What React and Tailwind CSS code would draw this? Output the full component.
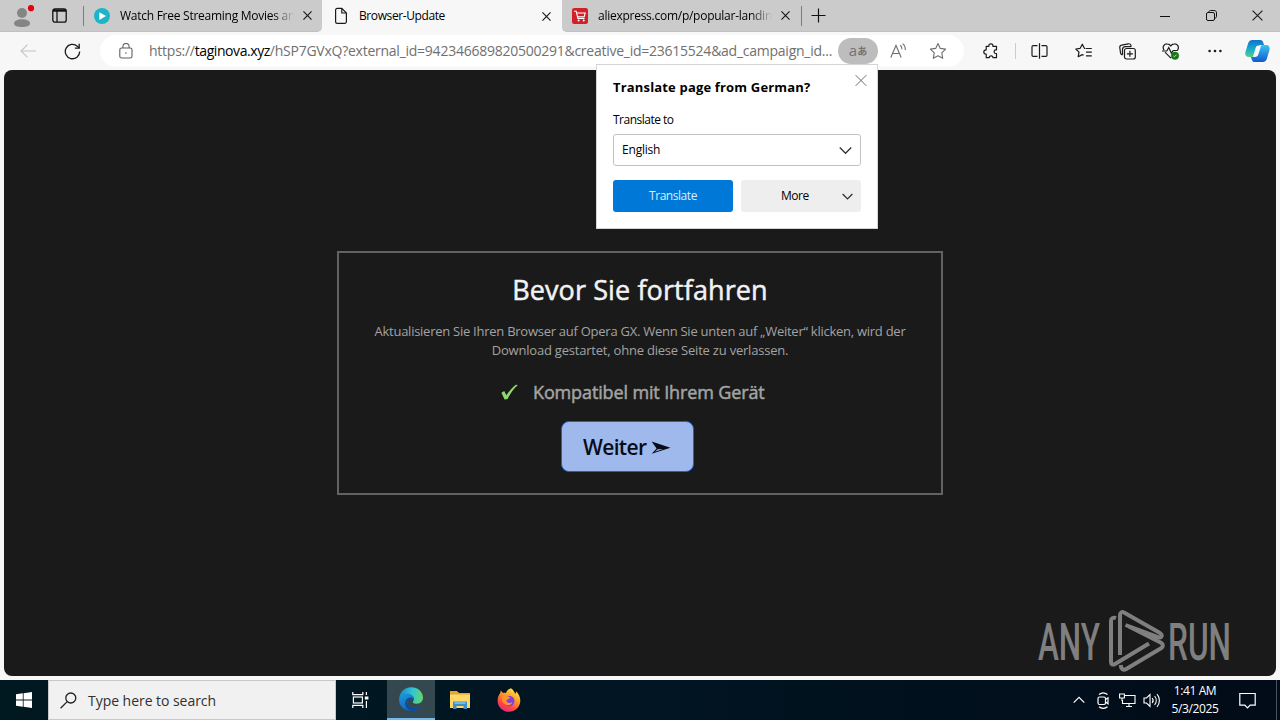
import React from 'react';
import { clsx } from 'clsx';

const PageIcon = () => (
  <svg width="14" height="18" viewBox="0 0 14 18" fill="none" stroke="#1a1a1a" strokeWidth="1.2">
    <path d="M1.6 3a1.6 1.6 0 0 1 1.6-1.6h4.6L12.4 6v8.8a1.6 1.6 0 0 1-1.6 1.6H3.2a1.6 1.6 0 0 1-1.6-1.6Z" />
    <path d="M7.8 1.6V6h4.4" />
  </svg>
);

const PlayIcon = () => (
  <svg width="16" height="16" viewBox="0 0 16 16">
    <circle cx="8" cy="8" r="8" fill="#1fb3c6" />
    <path d="M5.3 4.2 12 8l-6.7 3.9Z" fill="#fff" />
  </svg>
);

const CartIcon = () => (
  <svg width="16" height="16" viewBox="0 0 16 16">
    <rect width="16" height="16" rx="2.2" fill="#d2202b" />
    <g fill="none" stroke="#fff" strokeWidth="1.1">
      <path d="M2 3.2h2.2l1.7 7.2h6.6" />
      <path d="M4.7 5h8.5l-1 3.7H5.6" />
    </g>
    <circle cx="6.6" cy="12.5" r="1" fill="#fff" />
    <circle cx="11.7" cy="12.5" r="1" fill="#fff" />
  </svg>
);

const Cross = ({ size = 9, color = '#1a1a1a', width = 1.3 }) => (
  <svg width={size} height={size} viewBox="0 0 10 10" stroke={color} strokeWidth={width}>
    <path d="m.5.5 9 9M9.5.5l-9 9" />
  </svg>
);

const Chevron = ({ size = 12, color = '#333', up = false, width = 1.2 }) => (
  <svg
    width={size}
    height={size}
    viewBox="0 0 12 12"
    fill="none"
    stroke={color}
    strokeWidth={width}
    className={clsx(up && 'rotate-180')}
  >
    <path d="m.7 3.3 5.3 5.3 5.3-5.3" />
  </svg>
);

const Tab = ({ icon: Icon, title, active, className, textClass }) => (
  <div className={clsx('flex h-8 items-center', active && 'bg-[#f7f7f7]', className)}>
    <div className="flex w-4 shrink-0 justify-center"><Icon /></div>
    <div className={clsx('ml-[10px] w-[174px] whitespace-nowrap text-[12px] leading-4 text-black', !active && 'mask-r-from-88%', textClass)}>
      {title}
    </div>
    <div className="ml-[7px] flex w-3 justify-center"><Cross /></div>
  </div>
);

const TabStrip = () => (
  <div className="flex h-8 bg-[#f7f7f7]">
    <div className="flex w-[322px] items-center rounded-br-[5px] border-b border-[#c0c0c0] bg-[#cbcbcb]">
      <svg className="ml-3 shrink-0" width="24" height="26" viewBox="0 0 24 26">
        <circle cx="10" cy="10" r="5" fill="#858585" />
        <path d="M2 20.5c0-2.6 3-4.2 8-4.2s8 1.6 8 4.2c0 2.4-3.5 3.5-8 3.5s-8-1.1-8-3.5Z" fill="#858585" />
        <circle cx="19" cy="5.2" r="3.1" fill="#e3000f" />
      </svg>
      <svg className="ml-4 shrink-0" width="15" height="15" viewBox="0 0 15 15" fill="none" stroke="#111" strokeWidth="1.3">
        <rect x=".8" y=".8" width="13.4" height="13.4" rx="2.2" />
        <path d="M1 2.5h13" strokeWidth="2.4" />
        <path d="M5 3v11" />
      </svg>
      <div className="ml-4 h-5 w-px bg-[#7c7c7c]" />
      <Tab icon={PlayIcon} title="Watch Free Streaming Movies an" className="pl-2.5" textClass="tracking-[-0.26px]" />
    </div>
    <Tab icon={PageIcon} title="Browser-Update" active className="w-[240px] pl-[11px]" textClass="tracking-[-0.4px]" />
    <div className="flex flex-1 items-center rounded-bl-[5px] border-b border-[#c0c0c0] bg-[#cbcbcb]">
      <Tab icon={CartIcon} title="aliexpress.com/p/popular-landin" className="pl-2.5" textClass="tracking-[-0.26px]" />
      <div className="ml-[10px] h-5 w-px bg-[#7c7c7c]" />
      <svg className="ml-[9px]" width="15" height="15" viewBox="0 0 15 15" stroke="#111" strokeWidth="1.2">
        <path d="M7.5.5v14M.5 7.5h14" />
      </svg>
      <div className="ml-auto flex">
        <div className="flex w-[46px] items-center justify-center">
          <svg width="10" height="10" viewBox="0 0 10 10" stroke="#111"><path d="M0 5.5h10" /></svg>
        </div>
        <div className="flex w-[46px] items-center justify-center">
          <svg width="11" height="11" viewBox="0 0 11 11" fill="none" stroke="#111">
            <rect x=".5" y="2.5" width="8" height="8" rx="1.5" />
            <path d="M2.8 2.3C2.8 1.2 3.5.5 4.6.5h3.6c1.4 0 2.3.9 2.3 2.3v3.6c0 1.1-.7 1.8-1.8 1.8" />
          </svg>
        </div>
        <div className="flex w-[46px] items-center justify-center"><Cross size={11} width={1} /></div>
      </div>
    </div>
  </div>
);

const ToolButton = ({ children }) => (
  <div className="flex h-8 w-11 shrink-0 items-center justify-center">{children}</div>
);

const STAR = 'M8 1.3l2.05 4.4 4.75.65-3.45 3.35.85 4.8L8 12.2l-4.2 2.3.85-4.8L1.2 6.35l4.75-.65Z';

const Toolbar = () => (
  <div className="flex h-[38px] items-center bg-[#f7f7f7] pl-1.5">
    <ToolButton>
      <svg width="16" height="14" viewBox="0 0 16 14" fill="none" stroke="#c4c4c4" strokeWidth="1.1">
        <path d="M16 7H1M7.5.7 1 7l6.5 6.3" />
      </svg>
    </ToolButton>
    <ToolButton>
      <svg width="17" height="17" viewBox="0 0 17 17" fill="none" stroke="#1b1b1b" strokeWidth="1.3">
        <path d="M15.7 8.5A7.2 7.2 0 1 1 13.3 3.15L15.2 5" />
        <path d="M15.2.8V5.2H10.9" />
      </svg>
    </ToolButton>
    <div className="ml-[6px] flex h-8 w-[864px] items-center rounded-full bg-white pl-[19px]">
      <svg width="14" height="16" viewBox="0 0 14 16" fill="none" stroke="#5f5f5f" strokeWidth="1.1">
        <rect x=".8" y="5" width="12.2" height="10" rx="1.8" />
        <path d="M3.9 5V3.5a3.1 3.1 0 0 1 6.2 0V5" />
        <circle cx="6.9" cy="10" r=".8" fill="#5f5f5f" stroke="none" />
      </svg>
      <div className="ml-4 w-[689px] whitespace-nowrap text-[14px] leading-5 tracking-[-0.25px] text-[#707070]">
        https://<span className="tracking-[-0.43px] text-black">taginova.xyz</span>/hSP7GVxQ?external_id=942346689820500291&amp;creative_id=23615524&amp;ad_campaign_id...
      </div>
      <div className="flex h-[26px] w-10 shrink-0 items-center justify-center rounded-full bg-[#bdbdbd] text-[#737373]">
        <span className="pb-0.5 text-[15px] leading-none">a</span>
        <span className="text-[10px] font-bold leading-none">あ</span>
      </div>
      <svg className="ml-3 shrink-0" width="17" height="16" viewBox="0 0 17 16" fill="none" stroke="#707070" strokeWidth="1.1">
        <path d="M.8 14.5 6 2.5l5.2 12M2.5 10.5h7" />
        <path d="M10.3 2.2c1.2.9 1.7 2.3 1.6 4M12.6.6c2 1.5 2.9 3.8 2.6 6.5" />
      </svg>
      <svg className="ml-[22px] shrink-0" width="18" height="18" viewBox="0 0 16 16" fill="none" stroke="#707070" strokeWidth="1" strokeLinejoin="round">
        <path d={STAR} />
      </svg>
    </div>
    <div className="ml-[5px] flex items-center">
      <ToolButton>
        <svg width="17" height="17" viewBox="0 0 17 17" fill="none" stroke="#1b1b1b" strokeWidth="1.2" strokeLinejoin="round">
          <path d="M3.2 3.3h2.7c-.2-1.5.6-2.5 2-2.500s2.200 1 2 2.500h3.600v3.500h-.8c-2.100 0-2.100 3.700 0 3.700h.8v4.200H10c.1-1.100-.7-1.900-1.900-1.900s-2 .8-1.900 1.900H3.200v-3.600c-3.200-.1-3.200-4.300 0-4.300Z" />
        </svg>
      </ToolButton>
      <div className="ml-0.5 h-4 w-px bg-[#cccccc]" />
    </div>
    <div className="ml-px flex items-center">
      <ToolButton>
        <svg width="17" height="16" viewBox="0 0 17 16" fill="none" stroke="#1b1b1b" strokeWidth="1.2">
          <path d="M6.5 2.6H2.200a1.200 1.200 0 0 0-1.200 1.200v8.400a1.200 1.200 0 0 0 1.200 1.200h4.300M10.500 2.600h4.300A1.200 1.200 0 0 1 16 3.800v8.400a1.200 1.200 0 0 1-1.200 1.200h-4.300M8.500.3v15.400" />
        </svg>
      </ToolButton>
      <ToolButton>
        <svg width="17" height="16" viewBox="0 0 17 16" fill="none" stroke="#1b1b1b" strokeWidth="1.2" strokeLinejoin="round">
          <path d="M10.5 5.5 9.4 5.3 7.3 1.2 5.2 5.3.8 6l3.2 3.1-.8 4.600 4.100-2.100 1.300.6M11 5.500h5.800M11 9.200h5.800M11 12.900h5.800" />
        </svg>
      </ToolButton>
      <ToolButton>
        <svg width="17" height="17" viewBox="0 0 17 17" fill="none" stroke="#1b1b1b" strokeWidth="1.2">
          <rect x="5.5" y="5.5" width="10.8" height="10.5" rx="2" />
          <path d="M10.900 7.800v6M7.900 10.800h6M3.500 11.800c-1.200-.2-1.800-.8-2-2L.8 4.700C.6 3.400 1.300 2.400 2.600 2.200L9.300.8c1.300-.2 2.300.4 2.700 1.700l.3.900M3.500 11.800V6.500c0-1.800 1-2.900 2.900-2.900h5.900" />
        </svg>
      </ToolButton>
      <ToolButton>
        <svg width="18" height="17" viewBox="0 0 18 17" fill="none" stroke="#1b1b1b" strokeWidth="1.2">
          <path d="M2 7.200C-.2 3.500 2.500.8 5.200.9c1.600 0 2.700.8 3.600 2 .9-1.200 2-2 3.600-2 2.700-.1 5.300 2.600 3.200 6.300M3 9.200l5.500 5.600.7-.6" />
          <path d="M0 8h4.800l2-3.500 2.600 5.700 1.800-2.700h4.500" />
          <circle cx="13" cy="12.7" r="3.8" fill="#147814" stroke="#147814" strokeWidth=".5" />
          <path d="m11.500 12.900 1 .8 2-2" stroke="#d5ead5" strokeWidth=".9" />
        </svg>
      </ToolButton>
      <ToolButton>
        <svg width="14" height="4" viewBox="0 0 14 4" fill="#1b1b1b">
          <circle cx="1.6" cy="2" r="1.3" /><circle cx="7" cy="2" r="1.3" /><circle cx="12.4" cy="2" r="1.3" />
        </svg>
      </ToolButton>
      <CopilotIcon />
    </div>
  </div>
);

const CopilotIcon = () => (
  <svg className="ml-2 shrink-0" width="25" height="24" viewBox="0 0 25 24">
    <defs>
      <linearGradient id="cpA" x1="0" y1="0" x2="0" y2="1">
        <stop offset="0" stopColor="#1372c8" /><stop offset=".5" stopColor="#16a8cd" /><stop offset="1" stopColor="#54cf8b" />
      </linearGradient>
      <linearGradient id="cpB" x1="0" y1="0" x2="0" y2="1">
        <stop offset="0" stopColor="#3cc3f0" /><stop offset="1" stopColor="#1258d0" />
      </linearGradient>
    </defs>
    <path d="M7.500 1h7.600c2 0 2.800 1.300 3.300 3.100L19 6h-3c-2.200 0-3 1-3.500 2.700L10.300 15c-.7 2-1.600 3-3.700 3H3.800C.7 18-.2 15.500.5 12.700L3 4.800C3.700 2.300 5 1 7.500 1Z" fill="url(#cpA)" />
    <path d="M17.500 23H10c-2 0-2.900-1.200-3.400-3.100L6 18h2.800c2.200 0 3.100-1 3.700-2.800l2-6.200c.7-2 1.500-3 3.600-3h3.100c3 0 3.900 2.500 3.200 5.300L22 19.200c-.7 2.500-2 3.800-4.500 3.800Z" fill="url(#cpB)" />
    <path d="M12.200 6.800h2.600c1.300 0 1 1 .7 2l-2.300 7c-.4 1.200-1.200 2-2.600 2H8.900c-.8 0-.8-.7-.5-1.500l2.300-7.500c.3-1.100.7-1.800 1.500-2Z" fill="#f3fafa" />
  </svg>
);

const TranslatePopup = () => (
  <div className="absolute left-[596px] top-16 flex h-[165px] w-[282px] flex-col border border-[#d4d4d4] bg-white px-4 text-[12px] text-black">
    <div className="flex items-start justify-between">
      <h2 className="mt-[13px] whitespace-nowrap text-[13px] font-bold leading-[18px] tracking-[0.17px]">Translate page from German?</h2>
      <div className="-mr-1.5 mt-[9px] flex w-3 justify-center"><Cross size={13} color="#666" width={0.8} /></div>
    </div>
    <div className="mt-4 leading-4 tracking-[-0.5px]">Translate to</div>
    <div className="mt-[6px] flex h-8 items-center justify-between rounded-[3px] border border-[#c2c2c2] pl-2 pr-2">
      <span className="tracking-[-0.2px]">English</span>
      <Chevron size={13} />
    </div>
    <div className="mt-3.5 flex gap-2">
      <button className="h-8 w-[120px] rounded-[3px] bg-[#0078d7] tracking-[-0.45px] text-[#d8efff]">Translate</button>
      <button className="flex h-8 w-[120px] items-center rounded-[3px] bg-[#eeeeee] pl-10 pr-2">
        <span className="flex-1 text-left tracking-[-0.45px]">More</span>
        <Chevron size={11} width={1.5} />
      </button>
    </div>
  </div>
);

const UpdateCard = () => (
  <div className="flex h-[244px] w-[606px] flex-col items-center border-2 border-[#626262] text-[#a3a3a3]">
    <h1 className="mt-[18px] whitespace-nowrap text-[27px] leading-[38px] tracking-[0.1px] text-[#f2f2f2] [-webkit-text-stroke:0.5px]">Bevor Sie fortfahren</h1>
    <p className="mt-[13px] whitespace-nowrap text-center text-[13px] leading-[19px] tracking-[-0.26px]">
      <span>Aktualisieren Sie Ihren Browser auf Opera GX. Wenn Sie unten auf „Weiter“ klicken, wird der</span>
      <br />
      <span className="tracking-[-0.21px]">Download gestartet, ohne diese Seite zu verlassen.</span>
    </p>
    <div className="mt-4 flex h-[31px] w-[278px] items-center">
      <svg width="17" height="16" viewBox="0 0 17 16" fill="#8fd96b">
        <path d="M.4 8.700 3.200 7l2.200 4.300C8 7.300 11.300 3.200 14.900.7l2 .2C12.600 4.600 9.200 9.200 6.600 15.100l-3 .5Z" />
      </svg>
      <span className="ml-[15px] whitespace-nowrap text-[18px] leading-6 tracking-[-0.13px] [-webkit-text-stroke:0.5px]">Kompatibel mit Ihrem Gerät</span>
    </div>
    <button className="mr-[25px] mt-[14px] flex h-[51px] w-[133px] items-center rounded-lg border border-[#1561e6] bg-[#9fb9ec] pl-[21px] pt-0.5 text-[21px] font-semibold text-[#080c18]">
      <span className="w-[68px] text-left tracking-[-0.65px]">Weiter</span>
      <svg width="20" height="14" viewBox="0 0 20 14">
        <path d="M.6.6 19.500 6.800.6 12.800 5.600 7.600Z" fill="#080c18" />
        <path d="M4 10.700 6.600 8.200 12 8Z" fill="#9fb9ec" />
      </svg>
    </button>
  </div>
);

const Watermark = () => (
  <svg className="absolute bottom-[3px] right-[40px]" width="198" height="63" viewBox="0 0 198 63">
    <g fill="#7f7f7f" fontFamily="Roboto, sans-serif" fontSize="51" fontWeight="500">
      <text x="0" y="50" textLength="62" lengthAdjust="spacingAndGlyphs">ANY</text>
      <text x="130" y="50" textLength="63" lengthAdjust="spacingAndGlyphs">RUN</text>
    </g>
    <g fill="none" stroke="#7f7f7f" strokeWidth="4" strokeLinejoin="round">
      <path d="M78 8c-3-1-5 .5-5 3v41c0 2.500 2 3.200 4 2l34-20.500" />
      <path d="M82 45V5c0-2.600 2-3.600 4-2.400l36 20.500c3 1.800 1.600 5.500-2 4L87.500 15" />
      <path d="M82.700 55c.3 4 2.500 5.800 5.500 4L123 38.300c2.500-1.600 2.500-4 0-5.500L91 16.500" />
    </g>
  </svg>
);

const EdgeIcon = () => (
  <svg width="24" height="24" viewBox="0 0 24 24">
    <defs>
      <linearGradient id="edTop" x1="0" y1=".4" x2="1" y2=".5">
        <stop offset="0" stopColor="#1689c9" /><stop offset=".55" stopColor="#35c5d4" /><stop offset="1" stopColor="#62d868" />
      </linearGradient>
      <linearGradient id="edLow" x1="0" y1="0" x2=".5" y2="1">
        <stop offset="0" stopColor="#1b9ade" /><stop offset="1" stopColor="#1464b5" />
      </linearGradient>
    </defs>
    <path d="M.2 11C1 4.600 5.800.2 12.300.2 19 .2 24 5 24 10.600c0 3.800-2.700 6.200-6.200 6.200-3.300 0-4.600-1.300-3.600-2.600C16.300 11.200 13.600 7.300 9 7.300 4.600 7.300 1.500 8.400.2 11Z" fill="url(#edTop)" />
    <path d="M.1 12.200C.5 7.800 4.400 5.900 8.700 6.600c3.900.6 6 3 6 5.300-5.600-1.600-7.600 3-5.400 6 2.600 3.500 8.500 3.300 12.400 1.300C19.400 22.600 16 24 12.300 24 5.200 24-.3 18.800.1 12.200Z" fill="url(#edLow)" />
    <path d="M14.700 11.900c-5.600-1.600-7.600 3-5.400 6 2.600 3.500 8.500 3.300 12.400 1.300-2.100 3-5.300 4.500-8.700 4.800-6.500-.5-9-9.500-4.600-12.500 2-1.300 5.300-1.200 6.300.4Z" fill="#0d4c9a" />
  </svg>
);

const FolderIcon = () => (
  <svg width="22" height="20" viewBox="0 0 22 20">
    <path d="M1 1h7l2 2h11v15H1Z" fill="#e8a726" />
    <path d="M1 4.500h20V18H1Z" fill="#ffd968" />
    <path d="M4 11.500h14V19h-3.500v-3h-7v3H4Z" fill="#3f8ec4" />
    <path d="M5.500 13h11" stroke="#84c9ee" strokeWidth="1.5" />
  </svg>
);

const FirefoxIcon = () => (
  <svg width="24" height="24" viewBox="0 0 24 24">
    <defs>
      <linearGradient id="ffBody" x1=".8" y1="0" x2=".25" y2="1">
        <stop offset="0" stopColor="#fff04d" /><stop offset=".4" stopColor="#ff9b27" /><stop offset=".75" stopColor="#ff404b" /><stop offset="1" stopColor="#e3287c" />
      </linearGradient>
    </defs>
    <path d="M14 .2c3 2 3.500 4 4.100 5.500.9-.3 1-1.600.8-2.400C21.500 5.600 23.500 9 23.300 13c-.3 6.300-5.300 10.800-11.400 10.800S.6 19 .6 12.700C.6 9.700 1.600 7 3.300 5l.5-2.500L6 5c1-.3 2-.2 3 .1C9.500 3 11.600 1 14 .2Z" fill="url(#ffBody)" />
    <circle cx="12.2" cy="13" r="5.3" fill="#7d42dc" />
    <path d="M5 8c2-1.600 5-1.400 6.200.6l2 1c-.5 1.500-3.400 1.300-3.700 2.900-.2 1.900 2.900 3.500 5.900 1.400-1.200 4-6.700 4.600-9.200.9C4.700 12.500 4.700 9.800 5 8Z" fill="#ff9328" />
  </svg>
);

const TaskbarApp = ({ active, children }) => (
  <div className={clsx('flex h-10 w-12 items-center justify-center', active && 'border-b-2 border-[#76b9ed] bg-[#36484f]')}>
    {children}
  </div>
);

const Taskbar = () => (
  <div className="flex h-10 bg-linear-to-r from-[#001820] via-[#011522] to-[#020b18] text-white">
    <div className="flex w-12 items-center justify-center">
      <svg width="16" height="16" viewBox="0 0 16 16" fill="#fff">
        <path d="M0 2.300 6.800 1.300v6.200H0ZM7.600 1.200 16 0v7.500H7.600ZM0 8.400h6.800v6.300L0 13.700ZM7.600 8.400H16V16l-8.400-1.200Z" />
      </svg>
    </div>
    <div className="flex w-72 items-center border border-[#c9c9c9] bg-[#f1f1f1] pl-[11px] text-[#303030]">
      <svg width="17" height="17" viewBox="0 0 17 17" fill="none" stroke="#222" strokeWidth="1.3">
        <circle cx="10.8" cy="6" r="5" />
        <path d="M7.200 9.600.6 16.300" />
      </svg>
      <span className="ml-[11px] whitespace-nowrap pt-px text-[14px] leading-5 tracking-[-0.04px]">Type here to search</span>
    </div>
    <div className="flex">
      <TaskbarApp>
        <svg width="17" height="16" viewBox="0 0 17 16" fill="none" stroke="#fff" strokeWidth="1.2">
          <path d="M.8 0v2.600h10V0M.8 16v-2.600h10V16M14.400 0v3M14.400 9v7" />
          <rect x="1.4" y="5" width="9" height="6" />
          <path d="M12.800 6h3.600" strokeWidth="3" />
        </svg>
      </TaskbarApp>
      <div className="ml-[3px] flex gap-px">
        <TaskbarApp active><EdgeIcon /></TaskbarApp>
        <TaskbarApp><FolderIcon /></TaskbarApp>
        <TaskbarApp><FirefoxIcon /></TaskbarApp>
      </div>
    </div>
    <div className="ml-auto flex items-center">
      <Chevron up size={12} color="#fff" />
      <svg className="ml-3" width="13" height="17" viewBox="0 0 13 17" fill="none" stroke="#fff" strokeWidth="1.2">
        <rect x="1" y="5" width="7.5" height="7.5" rx="1.5" />
        <path d="m8.500 7.500 2.500-1.700v6L8.500 10M2 2.500c2.500-2 6-2 8.500 0M2 14.800c2.500 1.900 6 1.900 8.500 0" />
      </svg>
      <svg className="ml-[9px]" width="17" height="15" viewBox="0 0 17 15" fill="none" stroke="#fff" strokeWidth="1.1">
        <path d="M6 2.500h10v8H3.500V7M7 13.500h6M10 10.500v3" />
        <path d="M.6 1h4.800v4H.6ZM3 5v3" />
      </svg>
      <svg className="ml-[7px]" width="18" height="15" viewBox="0 0 18 15" fill="none" stroke="#fff" strokeWidth="1.1">
        <path d="M1 5h2.500L7 1.500v12L3.500 10H1ZM9.200 5c1.200 1.500 1.200 3.500 0 5M11.600 3c2.200 2.600 2.200 6.400 0 9M14 1.200c3.200 3.700 3.200 8.900 0 12.600" />
      </svg>
      <div className="ml-[6px] flex w-[56px] flex-col items-center whitespace-nowrap text-[12px] leading-[18px] tracking-[-0.4px]">
        <span>1:41 AM</span>
        <span>5/3/2025</span>
      </div>
      <svg className="ml-[16px]" width="17" height="17" viewBox="0 0 17 17" fill="none" stroke="#fff" strokeWidth="1.2">
        <path d="M.8 1.500h15.400v11.700h-5L8.500 16l-2.700-2.800h-5Z" />
      </svg>
      <div className="ml-5 mr-[3px] h-10 w-px bg-[#49535e]" />
    </div>
  </div>
);

const App = () => (
  <div className="relative flex h-[720px] w-[1280px] flex-col overflow-hidden bg-[#f7f7f7] font-['Open_Sans','Noto_Sans_CJK_JP',sans-serif]">
    <TabStrip />
    <Toolbar />
    <main className="relative mx-1 mb-1 flex h-[606px] items-center justify-center rounded-lg bg-[#1a1a1a]">
      <UpdateCard />
      <Watermark />
    </main>
    <Taskbar />
    <TranslatePopup />
  </div>
);

export default App;
